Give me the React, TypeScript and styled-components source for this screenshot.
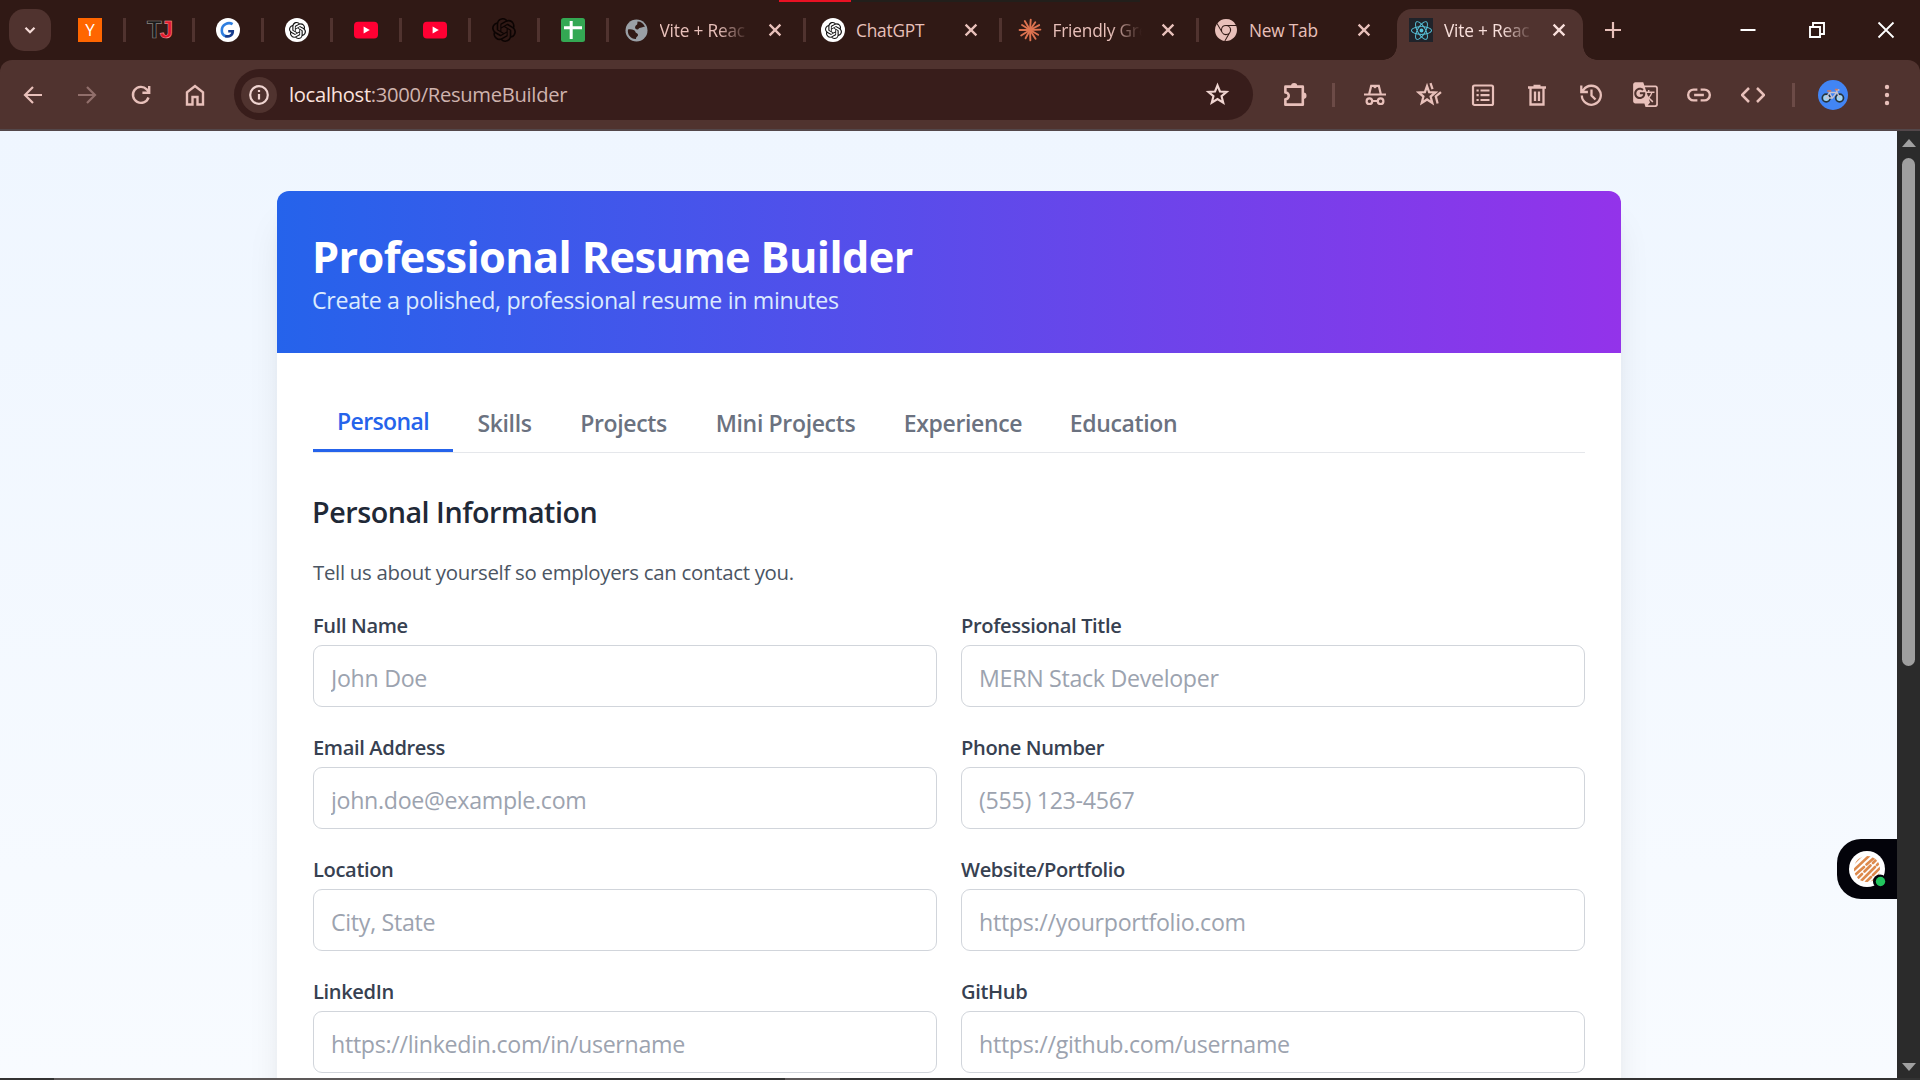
import React from "react";
import styled, { createGlobalStyle, css } from "styled-components";
import { SiOpenai, SiGooglechrome, SiReact } from "react-icons/si";
import { MdGTranslate } from "react-icons/md";

const GlobalStyle = createGlobalStyle`
  * { box-sizing: border-box; }
  body { margin: 0; overflow: hidden; font-family: "Open Sans", "Noto Sans", sans-serif; }
`;

const frame = "#50332f";
const strip = "#301915";
const pink = "#e8c0ba";

const Window = styled.div`
  width: 1920px;
  height: 1080px;
  display: flex;
  flex-direction: column;
  overflow: hidden;
  position: relative;
  background: ${strip};
`;

/* ---------- tab strip ---------- */

const TabStrip = styled.div`
  height: 60px;
  flex: none;
  display: flex;
  background: ${strip};
`;

const TabSearch = styled.button`
  width: 42px;
  height: 42px;
  margin: 9px 6px 0 9px;
  padding: 0;
  border: 0;
  border-radius: 15px;
  background: ${frame};
  color: #f5dcd8;
  display: grid;
  place-items: center;
`;

const separator = css`
  &::after {
    content: "";
    position: absolute;
    right: 0;
    top: 18px;
    width: 3px;
    height: 24px;
    background: ${frame};
  }
`;

const PinnedTab = styled.div`
  width: 69px;
  height: 60px;
  padding: 18px 0 0 21px;
  position: relative;
  ${separator}
`;

const Tab = styled.div<{ $last?: boolean }>`
  width: 196.5px;
  height: 60px;
  padding: 0 0 0 15.5px;
  display: flex;
  align-items: center;
  position: relative;
  color: ${pink};
  ${(p) => !p.$last && separator}
`;

const ActiveTab = styled.div`
  width: 186px;
  height: 51px;
  margin: 9px 14px 0 2px;
  padding: 0 0 9px 12px;
  display: flex;
  align-items: center;
  position: relative;
  background: ${frame};
  border-radius: 15px 15px 0 0;
  color: #f8dfdb;
  &::before, &::after {
    content: "";
    position: absolute;
    bottom: 0;
    width: 14px;
    height: 14px;
  }
  &::before { left: -14px; background: radial-gradient(circle at 0 0, transparent 13.5px, ${frame} 14px); }
  &::after { right: -14px; background: radial-gradient(circle at 100% 0, transparent 13.5px, ${frame} 14px); }
`;

const TabTitle = styled.span<{ $fade?: boolean }>`
  width: 89px;
  margin: 1px 0 0 11px;
  font-size: 17.3px;
  letter-spacing: -0.2px;
  white-space: nowrap;
  overflow: hidden;
  ${(p) => p.$fade && css`mask-image: linear-gradient(90deg, #000 58px, transparent 89px);`}
`;

const TabClose = styled.span`
  width: 24px;
  height: 24px;
  margin: 0 0 0 14px;
  display: grid;
  place-items: center;
`;

const NewTab = styled.button`
  width: 32px;
  height: 60px;
  border: 0;
  padding: 0;
  background: none;
  color: ${pink};
  display: grid;
  place-items: center;
`;

const WindowControls = styled.div`
  display: flex;
  margin-left: auto;
  color: #fff;
`;

const WindowButton = styled.button`
  width: 69px;
  height: 60px;
  padding: 0;
  border: 0;
  background: none;
  color: inherit;
  display: grid;
  place-items: center;
`;

const Favicon = styled.span<{ $bg?: string; $color?: string; $round?: boolean }>`
  width: 24px;
  height: 24px;
  flex: none;
  display: grid;
  place-items: center;
  border-radius: ${(p) => (p.$round ? "50%" : "0")};
  background: ${(p) => p.$bg || "transparent"};
  color: ${(p) => p.$color || "#fff"};
`;

const LetterY = styled.span`
  font-size: 17px;
  line-height: 24px;
`;

const LetterPair = styled.span`
  font: bold 24px/24px "Liberation Sans Narrow", "Liberation Sans", sans-serif;
  letter-spacing: -2px;
  color: #191919;
  -webkit-text-stroke: 0.7px #8c8683;
  & > b { color: #e2182c; -webkit-text-stroke: 0.5px #f4a5a5; }
`;

/* ---------- toolbar ---------- */

const ToolbarBack = styled.div`
  height: 71px;
  flex: none;
  background: ${strip};
`;

const Toolbar = styled.div`
  height: 71px;
  padding-left: 6px;
  display: flex;
  align-items: center;
  background: ${frame};
  border-bottom: 2px solid #53474a;
  border-radius: 12px 12px 0 0;
`;

const ToolButton = styled.button<{ $dim?: boolean }>`
  width: 54px;
  height: 54px;
  padding: 0;
  border: 0;
  background: none;
  color: ${(p) => (p.$dim ? "#916f6b" : pink)};
  display: grid;
  place-items: center;
`;

const Omnibox = styled.div`
  width: 1019px;
  height: 51px;
  margin: 0 15px 0 12px;
  padding: 0 22px 0 7px;
  border-radius: 26px;
  background: #381d1b;
  display: flex;
  align-items: center;
  color: #f0d5d1;
`;

const SiteInfo = styled.span`
  width: 36px;
  height: 36px;
  border-radius: 50%;
  background: ${frame};
  display: grid;
  place-items: center;
`;

const Address = styled.span`
  flex: 1;
  margin: -1px 0 0 12px;
  font-size: 20.2px;
  letter-spacing: -0.31px;
  color: #cfb3ae;
  & > b { font-weight: 400; color: #fbe2de; }
`;

const ToolDivider = styled.i<{ $left: number; $right: number }>`
  width: 3px;
  height: 24px;
  margin: 0 ${(p) => p.$right}px 0 ${(p) => p.$left}px;
  background: #6c4b47;
`;

const Avatar = styled.span`
  width: 30px;
  height: 30px;
  border-radius: 50%;
  background: #4285f4;
  display: grid;
  place-items: center;
`;

/* ---------- viewport ---------- */

const Viewport = styled.div`
  flex: 1;
  min-height: 0;
  display: flex;
`;

const Page = styled.main`
  flex: 1;
  height: 947px;
  padding: 60px 0 0 277px;
  overflow: hidden;
  background: linear-gradient(180deg, #eff6ff 0, #ffffff 1690px);
`;

const Card = styled.section`
  width: 1344px;
  height: 1400px;
  border-radius: 12px;
  overflow: hidden;
  background: #fff;
  box-shadow: 0 30px 37.5px -7.5px rgba(0, 0, 0, 0.1), 0 12px 15px -9px rgba(0, 0, 0, 0.1);
`;

const Banner = styled.header`
  height: 162px;
  padding: 36px 35px;
  color: #fff;
  background: linear-gradient(90deg, #2563eb, #9333ea);
`;

const Title = styled.h1`
  margin: 0;
  font-size: 43.3px;
  line-height: 60px;
  height: 54px;
  font-weight: 700;
  letter-spacing: -0.65px;
`;

const Tagline = styled.p`
  margin: 0;
  font-size: 23.2px;
  line-height: 39px;
  letter-spacing: -0.32px;
  color: #dbeafe;
`;

const Content = styled.div`
  padding: 36px;
`;

const FormTabs = styled.nav`
  display: flex;
  height: 64px;
  margin-bottom: 36px;
  border-bottom: 1px solid #e5e7eb;
`;

const FormTab = styled.button<{ $active?: boolean; $width: number }>`
  width: ${(p) => p.$width}px;
  height: 63px;
  padding: ${(p) => (p.$active ? "3px 0 0" : "5px 0 0")};
  border: 0;
  border-bottom: ${(p) => (p.$active ? "3px solid #2563eb" : "0")};
  background: none;
  font: 600 23px/36px "Open Sans", sans-serif;
  letter-spacing: ${(p) => (p.$active ? -0.6 : -0.35)}px;
  white-space: nowrap;
  color: ${(p) => (p.$active ? "#2563eb" : "#6b7280")};
`;

const SectionTitle = styled.h2`
  margin: 0 0 22px -1px;
  padding-top: 2px;
  font-size: 28.7px;
  line-height: 42px;
  font-weight: 600;
  letter-spacing: -0.47px;
  color: #1f2937;
`;

const SectionText = styled.p`
  margin: 0 0 22px;
  padding-top: 2px;
  font-size: 20.4px;
  line-height: 30px;
  letter-spacing: -0.29px;
  color: #4b5563;
`;

const Fields = styled.div`
  display: grid;
  grid-template-columns: 624px 624px;
  gap: 24px;
`;

const Field = styled.label`
  display: flex;
  flex-direction: column;
  gap: 4px;
`;

const FieldLabel = styled.span`
  padding-top: 2px;
  font-size: 20.1px;
  line-height: 30px;
  font-weight: 600;
  letter-spacing: -0.36px;
  color: #374151;
`;

const Input = styled.input`
  height: 62px;
  padding: 3px 17px 0;
  border: 1px solid #d1d5db;
  border-radius: 9px;
  background: #fff;
  font: 400 23.2px "Open Sans", sans-serif;
  letter-spacing: -0.3px;
  outline: 0;
  &::placeholder { color: #9ca3af; opacity: 1; }
`;

const Scrollbar = styled.div`
  width: 23px;
  display: flex;
  flex-direction: column;
  align-items: center;
  padding: 8px 0 0;
  background: #2b2b2b;
`;

const ScrollArrow = styled.i<{ $down?: boolean }>`
  width: 0;
  height: 0;
  border: 7.5px solid transparent;
  border-top-width: ${(p) => (p.$down ? 8 : 0)}px;
  border-bottom-width: ${(p) => (p.$down ? 0 : 8)}px;
  border-${(p) => (p.$down ? "top" : "bottom")}-color: #a0a0a0;
`;

const ScrollThumb = styled.i`
  width: 13px;
  height: 508px;
  margin: 11px 0 397px;
  border-radius: 7px;
  background: #9f9f9f;
`;

const TaskbarEdge = styled.div`
  height: 2px;
  flex: none;
  background: linear-gradient(90deg, #333 54px, #5d5959 54px 440px, #333 440px 785px, #5d5959 785px 840px, #333 840px);
`;

const Progress = styled.div`
  position: absolute;
  top: 0;
  left: 779px;
  width: 361px;
  height: 2px;
  background: linear-gradient(90deg, #e81123 72px, #221f1b 72px);
`;

const Widget = styled.div`
  position: absolute;
  left: 1837px;
  top: 839px;
  width: 60px;
  height: 60px;
  border-radius: 24px 0 0 24px;
  background: #03030a;
  display: grid;
  place-items: center;
`;

/* ---------- drawings ---------- */

type DrawProps = { size?: number; w?: number; children: React.ReactNode };
const Line = ({ size = 24, w = 2.2, children }: DrawProps) => (
  <svg width={size} height={size} viewBox="0 0 24 24" fill="none" stroke="currentColor" strokeWidth={w}>
    {children}
  </svg>
);

const Cross = () => <Line w={2.3}><path d="M6.600 6.600 17.400 17.400M17.400 6.600 6.600 17.400" /></Line>;

const Globe = () => (
  <svg width="24" height="24" viewBox="0 0 24 24">
    <circle cx="11.500" cy="12.500" r="11" fill="#9aa0a6" />
    <path
      d="M3 11.500c3.500-.5 7 .2 7.500 2.500.3 1.500 2.500 1 2.500 3 0 1.500-2 1.500-2 4-5 .3-9-4.500-8-9.500zM12.500 3.500c3.500 0 6.300 2 7.500 5.500-2-.8-2.500.8-4.500.8-2 0-1.500 2-3.500 1.700-1.800-.3-2.500-2-1.500-3.500.8-1.200 1.500-1 1.800-2z"
      fill="#301915"
    />
  </svg>
);

const YouTube = () => (
  <svg width="24" height="24" viewBox="0 0 24 24">
    <rect y="3.800" width="24" height="16.800" rx="4" fill="#ff0033" />
    <path d="M9.600 8.600v7l6.200-3.500z" fill="#fff" />
  </svg>
);

const Sheet = () => (
  <svg width="24" height="24" viewBox="0 0 24 24">
    <rect width="24" height="24" rx="2.500" fill="#34a853" />
    <path d="M10.200 3v18M3 9.700h18" stroke="#fff" strokeWidth="3" />
  </svg>
);

const BlueG = () => (
  <svg width="24" height="24" viewBox="0 0 24 24" fill="none" strokeWidth="2.600">
    <path d="M16.600 6.200C12.200 3.600 5.800 6.600 5.800 12.400c0 3 2 5.300 4.400 5.900" stroke="#2f7fe0" />
    <path d="M9.200 17.900c4 1.400 7.600-.7 7.600-4.700h-4.600" stroke="#173c8c" />
  </svg>
);

const Burst = () => (
  <svg width="24" height="24" viewBox="0 0 24 24" stroke="#de7350" strokeWidth="1.900" strokeLinecap="round">
    {[4, 34, 62, 88, 120, 148, 178, 208, 238, 270, 302, 330].map((a, i) => (
      <path key={a} d={`M12 12V${i % 3 === 1 ? 2.6 : 1.6}`} transform={`rotate(${a} 12 12)`} />
    ))}
  </svg>
);

const Bike = () => (
  <svg width="24" height="24" viewBox="0 0 24 24" fill="none">
    <g fill="#9fd4f5" stroke="#26343c" strokeWidth="1.700">
      <circle cx="5.200" cy="15" r="3.900" />
      <circle cx="18.600" cy="15" r="3.900" />
    </g>
    <path d="M5.200 15 8.400 9.500h7.400L11.400 15zM8.400 9.500l3 5.500M18.600 15 15.200 7h3.200" stroke="#c9c3cf" strokeWidth="1.300" />
    <path d="M6.200 8h4M14 6.600h2.800" stroke="#d3795b" strokeWidth="1.600" />
  </svg>
);

const WidgetFace = () => (
  <svg width="60" height="60" viewBox="0 0 60 60">
    <defs><clipPath id="face"><circle cx="30" cy="30" r="13" /></clipPath></defs>
    <circle cx="30" cy="30" r="18" fill="#fff" />
    <g clipPath="url(#face)" stroke="#dd8a4d" strokeWidth="2.600" strokeLinecap="round">
      <path d="M14 27 26 15M17 31 33 16M18 36l9-8M29.500 25.500 38 18M19 41l6-6M27.500 32.500l6-6M36 24l5-5M24 42l14-14M40 26l3-3M29 43l5-5M36 36l8-8M34 44l10-10" />
    </g>
    <circle cx="43" cy="42.500" r="7" fill="#03030a" />
    <circle cx="43.500" cy="42.500" r="4.700" fill="#22c55e" />
  </svg>
);

/* ---------- data ---------- */

const formTabs: [string, number][] = [
  ["Personal", 140], ["Skills", 103], ["Projects", 135], ["Mini Projects", 189], ["Experience", 166], ["Education", 155],
];

const fields: [string, string][] = [
  ["Full Name", "John Doe"],
  ["Professional Title", "MERN Stack Developer"],
  ["Email Address", "john.doe@example.com"],
  ["Phone Number", "(555) 123-4567"],
  ["Location", "City, State"],
  ["Website/Portfolio", "https://yourportfolio.com"],
  ["LinkedIn", "https://linkedin.com/in/username"],
  ["GitHub", "https://github.com/username"],
];

const pinned = [
  <Favicon $bg="#ff6600"><LetterY>Y</LetterY></Favicon>,
  <Favicon><LetterPair>T<b>J</b></LetterPair></Favicon>,
  <Favicon $bg="#fff" $round><BlueG /></Favicon>,
  <Favicon $bg="#fff" $color="#111" $round><SiOpenai size={17} /></Favicon>,
  <Favicon><YouTube /></Favicon>,
  <Favicon><YouTube /></Favicon>,
  <Favicon $color="#0c0403"><SiOpenai size={24} /></Favicon>,
  <Favicon><Sheet /></Favicon>,
];

const tabs = [
  { title: "Vite + Reac", fade: true, icon: <Favicon><Globe /></Favicon> },
  { title: "ChatGPT", icon: <Favicon $bg="#fff" $color="#111" $round><SiOpenai size={17} /></Favicon> },
  { title: "Friendly Gre", fade: true, icon: <Favicon><Burst /></Favicon> },
  { title: "New Tab", icon: <Favicon $color={pink}><SiGooglechrome size={22} /></Favicon> },
];

export default function App() {
  return (
    <>
      <GlobalStyle />
      <Window>
        <TabStrip>
          <TabSearch><Line><path d="m7.500 9.800 4.500 4.500 4.500-4.500" /></Line></TabSearch>
          {pinned.map((icon, i) => <PinnedTab key={i}>{icon}</PinnedTab>)}
          {tabs.map((t, i) => (
            <Tab key={t.title} $last={i === 3}>
              {t.icon}
              <TabTitle $fade={t.fade}>{t.title}</TabTitle>
              <TabClose><Cross /></TabClose>
            </Tab>
          ))}
          <ActiveTab>
            <Favicon $bg="#20232a" $color="#58c4dc"><SiReact size={21} /></Favicon>
            <TabTitle $fade>Vite + Reac</TabTitle>
            <TabClose><Cross /></TabClose>
          </ActiveTab>
          <NewTab><Line><path d="M12 4v16M4 12h16" /></Line></NewTab>
          <WindowControls>
            <WindowButton><Line w={2}><path d="M4.500 12h15" /></Line></WindowButton>
            <WindowButton>
              <Line w={1.900}><path d="M5 9h10v10H5zM8 9V5h11v11h-4" /></Line>
            </WindowButton>
            <WindowButton><Line w={1.800}><path d="m4.500 4.500 15 15m0-15-15 15" /></Line></WindowButton>
          </WindowControls>
        </TabStrip>

        <ToolbarBack>
          <Toolbar>
            <ToolButton><Line><path d="M21 12H4.500M12 4l-8 8 8 8" /></Line></ToolButton>
            <ToolButton $dim><Line><path d="M3 12h16.500M12 4l8 8-8 8" /></Line></ToolButton>
            <ToolButton>
              <Line w={2.400}><path d="M19.500 14.500A8 8 0 1 1 17.700 6.300L20 8.600M20.200 3v6.800h-6.800" /></Line>
            </ToolButton>
            <ToolButton><Line w={2.400}><path d="M4 21.500V9.300l8-6.300 8 6.300v12.200h-5.500V14h-5v7.500z" /></Line></ToolButton>
            <Omnibox>
              <SiteInfo>
                <Line><circle cx="12" cy="12" r="8.800" /><path d="M12 11v5.500M12 7v2" /></Line>
              </SiteInfo>
              <Address><b>localhost</b>:3000/ResumeBuilder</Address>
              <Line size={27} w={1.900}>
                <path d="m12 3.800 2.200 5.500 5.900.4-4.500 3.800 1.500 5.800L12 16.100l-5.100 3.200 1.500-5.800L3.900 9.700l5.900-.4z" />
              </Line>
            </Omnibox>
            <ToolButton>
              <Line size={27} w={2.300}>
                <path d="M3 5h15.500v16H3v-4.800a3 3 0 0 0 0-6z" strokeLinejoin="round" />
                <path d="M8 4.500a2.800 2.800 0 0 1 5.600 0zM19 10.200a2.800 2.800 0 0 1 0 5.600z" fill="currentColor" stroke="none" />
              </Line>
            </ToolButton>
            <ToolDivider $left={10} $right={13} />
            <ToolButton>
              <Line>
                <path d="M1 11.500h22M6.200 11 8.200 2.800h7.600L17.800 11M10.500 2.800 12 4l1.500-1.200M9.200 18h5.600" />
                <circle cx="6.400" cy="18.200" r="2.800" /><circle cx="17.600" cy="18.200" r="2.800" />
              </Line>
            </ToolButton>
            <ToolButton>
              <Line size={27} w={2}>
                <path d="m9.800 4.500 1.900 5.400 5.600.3-4.300 3.600 1.500 5.700-4.700-3.100-4.700 3.100 1.500-5.700-4.300-3.600 5.600-.3zM12.900 1.800l1.800 5.400M22.200 9.800l-4.600 3.800 1.600 6.400" />
              </Line>
            </ToolButton>
            <ToolButton>
              <Line>
                <rect x="2" y="2.500" width="20" height="19.500" rx="1.500" />
                <path d="M9.500 7.500h9M9.500 12.200h9M9.500 17h9M5.500 7.500h2.200M5.500 12.200h2.200M5.500 17h2.200" />
              </Line>
            </ToolButton>
            <ToolButton>
              <Line w={2.300}>
                <path d="M3 4.500h18M8.500 3h7M5.500 5v16.500h13V5M10 8.500V18M14 8.500V18" />
              </Line>
            </ToolButton>
            <ToolButton>
              <Line w={2.300}><path d="M2.800 12.500A9.500 9.500 0 1 0 4.500 6.800L2.500 9.300M2.300 2.500V9h6.600M12.500 6.500v6l4 4" /></Line>
            </ToolButton>
            <ToolButton><MdGTranslate size={27} /></ToolButton>
            <ToolButton>
              <Line size={26}>
                <path d="M10.500 7H7a5 5 0 0 0 0 10h3.500M13.500 7H17a5 5 0 0 1 0 10h-3.500M7.500 12h9" />
              </Line>
            </ToolButton>
            <ToolButton><Line w={2.500}><path d="m8 5-7 7 7 7M16 5l7 7-7 7" /></Line></ToolButton>
            <ToolDivider $left={12} $right={11} />
            <ToolButton><Avatar><Bike /></Avatar></ToolButton>
            <ToolButton>
              <svg width="24" height="24" fill="currentColor">
                <circle cx="12" cy="4" r="2.200" /><circle cx="12" cy="12" r="2.200" /><circle cx="12" cy="20" r="2.200" />
              </svg>
            </ToolButton>
          </Toolbar>
        </ToolbarBack>

        <Viewport>
          <Page>
            <Card>
              <Banner>
                <Title>Professional Resume Builder</Title>
                <Tagline>Create a polished, professional resume in minutes</Tagline>
              </Banner>
              <Content>
                <FormTabs>
                  {formTabs.map(([name, width], i) => (
                    <FormTab key={name} $active={i === 0} $width={width}>{name}</FormTab>
                  ))}
                </FormTabs>
                <SectionTitle>Personal Information</SectionTitle>
                <SectionText>Tell us about yourself so employers can contact you.</SectionText>
                <Fields>
                  {fields.map(([label, hint]) => (
                    <Field key={label}>
                      <FieldLabel>{label}</FieldLabel>
                      <Input placeholder={hint} />
                    </Field>
                  ))}
                </Fields>
              </Content>
            </Card>
          </Page>
          <Scrollbar>
            <ScrollArrow />
            <ScrollThumb />
            <ScrollArrow $down />
          </Scrollbar>
        </Viewport>
        <TaskbarEdge />
        <Progress />
        <Widget><WidgetFace /></Widget>
      </Window>
    </>
  );
}
